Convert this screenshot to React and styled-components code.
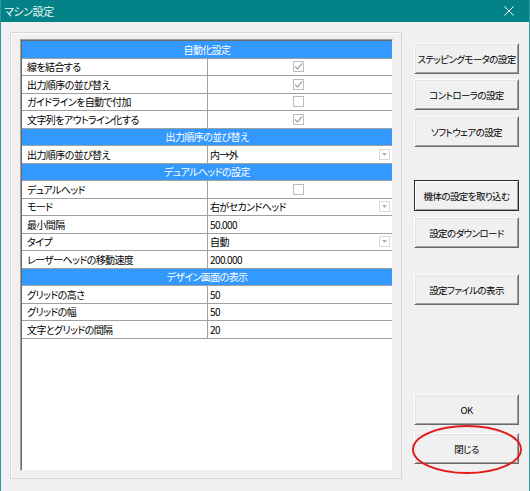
import React from "react";
import styled, { createGlobalStyle } from "styled-components";

const GlobalStyle = createGlobalStyle`
  body {
    margin: 0;
    background: #f0f0f0;
    font-family: "Noto Sans CJK JP", "Noto Sans", sans-serif;
  }
`;

const Window = styled.div`
  width: 530px;
  height: 491px;
  box-sizing: border-box;
  background: #f0f0f0;
  border-left: 1px solid #2b9a9e;
  border-right: 1px solid #2b9a9e;
  display: flex;
  flex-direction: column;
  font-feature-settings: "palt";
`;

const TitleBar = styled.div`
  height: 22px;
  flex: none;
  background: #038387;
  color: #e8f4f4;
  display: flex;
  align-items: center;
  justify-content: space-between;
  padding: 0 15px 0 3px;
  font-size: 11px;
  letter-spacing: -0.4px;
`;

const Body = styled.div`
  flex: 1;
  display: flex;
  align-items: flex-start;
`;

const Panel = styled.div`
  width: 392px;
  height: 447px;
  box-sizing: border-box;
  margin: 10px 0 0 9px;
  padding: 6px 8px 7px 9px;
  border: 1px solid #d5d5d5;
  box-shadow: inset 1px 1px #fff;
`;

const Grid = styled.div`
  height: 100%;
  box-sizing: border-box;
  background: #fff;
  border: 1px solid;
  border-color: #a0a0a0 #f0f0f0 #f0f0f0 #a0a0a0;
  box-shadow: inset 1px 1px #696969;
  padding: 1px 0 0 1px;
  font-size: 10px;
  letter-spacing: -0.6px;
  color: #000;
`;

const HeaderRow = styled.div`
  height: 17.5px;
  box-sizing: border-box;
  background: #3399ff;
  color: #fff;
  border-bottom: 1px solid #a0a0a0;
  display: flex;
  align-items: center;
  justify-content: center;
`;

const Row = styled.div`
  height: 17.5px;
  box-sizing: border-box;
  border-bottom: 1px solid #a0a0a0;
  display: grid;
  grid-template-columns: 186px 1fr;
`;

const Label = styled.div`
  border-right: 1px solid #a0a0a0;
  padding-left: 5px;
  display: flex;
  align-items: center;
  white-space: nowrap;
`;

const Value = styled.div`
  padding: 0 2px 0 2px;
  display: flex;
  align-items: center;
  justify-content: ${(p) => (p.$center ? "center" : "space-between")};
  white-space: nowrap;
`;

const CheckBox = styled.span`
  width: 11px;
  height: 11px;
  box-sizing: border-box;
  border: 1px solid #bcbcbc;
  background: #fff;
  display: flex;
  align-items: center;
  justify-content: center;
  margin-left: -4px;
`;

const DropArrow = styled.span`
  width: 11px;
  height: 11px;
  box-sizing: border-box;
  border: 1px solid #d9d9d9;
  display: flex;
  align-items: center;
  justify-content: center;
`;

const ButtonColumn = styled.div`
  display: flex;
  flex-direction: column;
  margin-left: 12px;
  width: 105px;
`;

const ButtonWrap = styled.div`
  position: relative;
  margin-top: ${(p) => p.$gap}px;
`;

const Button = styled.button`
  width: 105px;
  height: 31px;
  box-sizing: border-box;
  background: #f0f0f0;
  border: 1px solid;
  border-color: ${(p) => (p.$default ? "#2a2a2a" : "#ffffff #696969 #696969 #ffffff")};
  box-shadow: ${(p) =>
    p.$default
      ? "inset 1px 1px #fff, inset -1px -1px #a0a0a0"
      : "inset 1px 1px #e3e3e3, inset -1px -1px #a0a0a0"};
  font-family: inherit;
  font-feature-settings: "palt";
  font-size: 9.5px;
  letter-spacing: -0.6px;
  color: #000;
  padding: 0;
  white-space: nowrap;
`;

const Ring = styled.svg`
  position: absolute;
  left: -2px;
  top: -8px;
  pointer-events: none;
`;

const sections = [
  {
    title: "自動化設定",
    rows: [
      ["線を結合する", { check: true }],
      ["出力順序の並び替え", { check: true }],
      ["ガイドラインを自動で付加", { check: false }],
      ["文字列をアウトライン化する", { check: true }],
    ],
  },
  {
    title: "出力順序の並び替え",
    rows: [["出力順序の並び替え", { select: "内→外" }]],
  },
  {
    title: "デュアルヘッドの設定",
    rows: [
      ["デュアルヘッド", { check: false }],
      ["モード", { select: "右がセカンドヘッド" }],
      ["最小間隔", { text: "50.000" }],
      ["タイプ", { select: "自動" }],
      ["レーザーヘッドの移動速度", { text: "200.000" }],
    ],
  },
  {
    title: "デザイン画面の表示",
    rows: [
      ["グリッドの高さ", { text: "50" }],
      ["グリッドの幅", { text: "50" }],
      ["文字とグリッドの間隔", { text: "20" }],
    ],
  },
];

const buttons = [
  { label: "ステッピングモータの設定", gap: 21 },
  { label: "コントローラの設定", gap: 5 },
  { label: "ソフトウェアの設定", gap: 6 },
  { label: "機体の設定を取り込む", gap: 33, isDefault: true },
  { label: "設定のダウンロード", gap: 6 },
  { label: "設定ファイルの表示", gap: 26 },
  { label: "OK", gap: 89 },
  { label: "閉じる", gap: 8, circled: true },
];

function Check({ on }) {
  return (
    <CheckBox>
      {on && (
        <svg width="9" height="9" viewBox="0 0 9 9">
          <path d="M1 4.5 L3.5 7 L8 1.5" fill="none" stroke="#a8a8a8" strokeWidth="1.2" />
        </svg>
      )}
    </CheckBox>
  );
}

function Cell({ v }) {
  if ("check" in v) {
    return (
      <Value $center>
        <Check on={v.check} />
      </Value>
    );
  }
  if (v.select) {
    return (
      <Value>
        <span>{v.select}</span>
        <DropArrow>
          <svg width="5" height="3" viewBox="0 0 5 3">
            <path d="M0 0 H5 L2.5 3 Z" fill="#b0b0b0" />
          </svg>
        </DropArrow>
      </Value>
    );
  }
  return (
    <Value>
      <span>{v.text}</span>
    </Value>
  );
}

export default function App() {
  return (
    <>
      <GlobalStyle />
      <Window>
        <TitleBar>
          <span>マシン設定</span>
          <svg width="10" height="10" viewBox="0 0 10 10">
            <path d="M0.5 0.5 L9.5 9.5 M9.5 0.5 L0.5 9.5" stroke="#fff" strokeWidth="1" />
          </svg>
        </TitleBar>
        <Body>
          <Panel>
            <Grid>
              {sections.map((s) => (
                <React.Fragment key={s.title + s.rows.length}>
                  <HeaderRow>{s.title}</HeaderRow>
                  {s.rows.map(([label, v], i) => (
                    <Row key={i}>
                      <Label>{label}</Label>
                      <Cell v={v} />
                    </Row>
                  ))}
                </React.Fragment>
              ))}
            </Grid>
          </Panel>
          <ButtonColumn>
            {buttons.map((b) => (
              <ButtonWrap key={b.label} $gap={b.gap}>
                <Button $default={b.isDefault}>{b.label}</Button>
                {b.circled && (
                  <Ring width="112" height="50" viewBox="0 0 112 50">
                    <ellipse cx="55" cy="24.5" rx="54" ry="23.5" fill="none" stroke="#e31b1b" strokeWidth="2" />
                  </Ring>
                )}
              </ButtonWrap>
            ))}
          </ButtonColumn>
        </Body>
      </Window>
    </>
  );
}
